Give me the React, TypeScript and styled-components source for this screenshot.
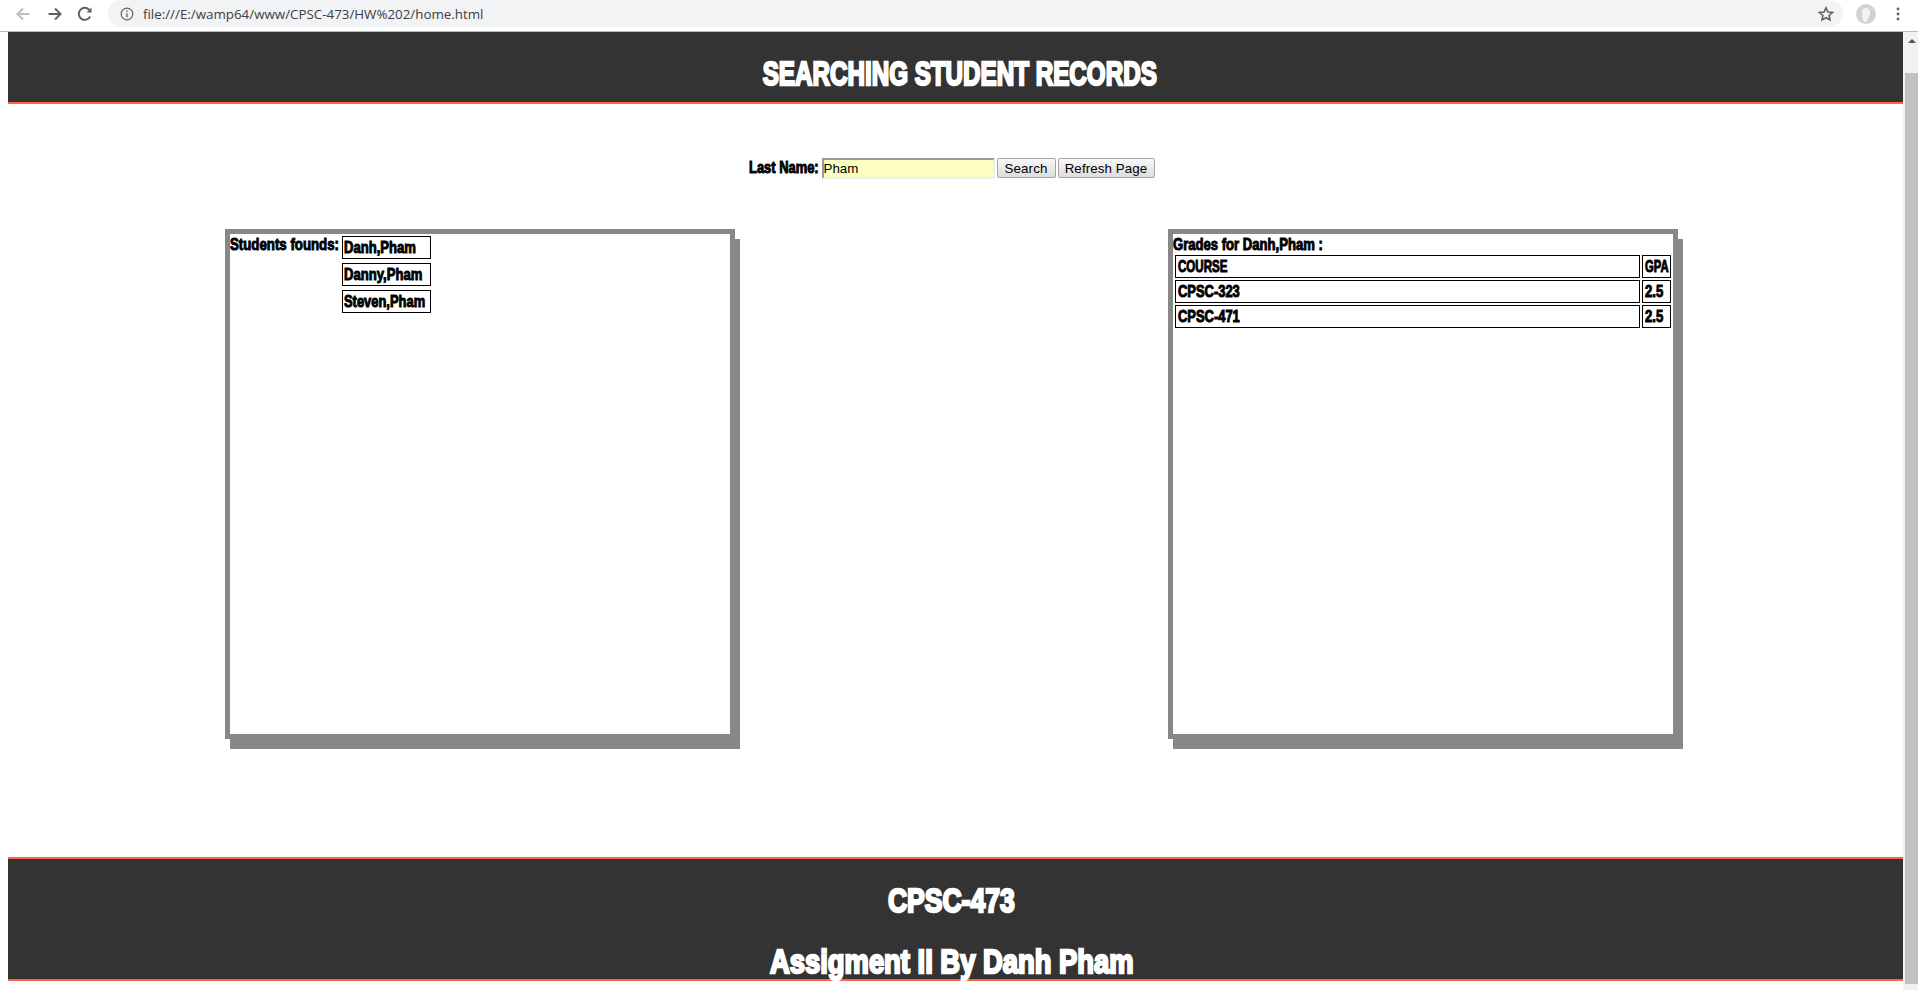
import React from "react";
import styled, { createGlobalStyle, css } from "styled-components";

const Global = createGlobalStyle`
  html, body { margin: 0; padding: 0; height: 990px; overflow: hidden; background: #fff; }
  #root { height: 990px; }
`;

const heavy = css`
  font-family: "Liberation Sans", sans-serif;
  font-weight: 700;
  white-space: nowrap;
  -webkit-text-stroke: 1px currentColor;
`;

const Squeeze = styled.span<{ $sx: number }>`
  display: inline-block;
  transform: scaleX(${(p) => p.$sx});
  transform-origin: left center;
`;

const Shell = styled.div`
  width: 1918px;
  height: 990px;
  display: flex;
  flex-direction: column;
  overflow: hidden;
`;
const Toolbar = styled.div`
  height: 31px;
  flex: none;
  display: flex;
  align-items: flex-start;
  background: #fff;
  border-bottom: 1px solid #b9b9b9;
`;
const NavButton = styled.div<{ $w: number; $ml?: number }>`
  width: ${(p) => p.$w}px;
  height: 27px;
  margin-left: ${(p) => p.$ml ?? 0}px;
  flex: none;
  display: flex;
  align-items: center;
  justify-content: center;
`;
const AddressBar = styled.div`
  width: 1735px;
  height: 27px;
  margin-left: 3px;
  flex: none;
  display: flex;
  align-items: center;
  background: #f1f3f4;
  border-radius: 14px;
  padding: 0 9px 0 12px;
  box-sizing: border-box;
`;
const Url = styled.span`
  margin-left: 9px;
  flex: 1;
  font: 13.35px "Open Sans", sans-serif;
  color: #3c4043;
  white-space: nowrap;
`;
const Body = styled.div`
  flex: 1;
  display: flex;
  min-height: 0;
`;
const Page = styled.div`
  flex: 1;
  display: flex;
  flex-direction: column;
  padding-left: 8px;
  min-width: 0;
`;
const Banner = styled.header`
  height: 70px;
  flex: none;
  background: #333;
  border-bottom: 2px solid #ff6347;
  display: flex;
  justify-content: center;
  padding-left: 8px;
`;
const Title = styled.h1`
  ${heavy};
  margin: 23px 0 0;
  font-size: 34px;
  line-height: 36px;
  color: #fff;
  -webkit-text-stroke: 2.4px #fff;
  transform: scaleX(0.712);
`;
const SearchRow = styled.form`
  margin: 54px 0 0;
  height: 21px;
  display: flex;
  align-items: flex-start;
  justify-content: center;
  padding-right: 8px;
`;
const Label = styled.label`
  ${heavy};
  width: 70px;
  font-size: 17px;
  line-height: 19px;
  color: #000;
  margin-right: 3px;
`;
const TextInput = styled.input`
  width: 173px;
  height: 21px;
  box-sizing: border-box;
  border-style: solid;
  border-width: 2px;
  border-color: #9a9a9a #eee #eee #9a9a9a;
  background: #fcffc0;
  padding: 0;
  font: 13.33px "Liberation Sans", sans-serif;
  color: #000;
  outline: none;
`;
const Btn = styled.button<{ $w: number }>`
  width: ${(p) => p.$w}px;
  height: 20px;
  box-sizing: border-box;
  margin-left: 2px;
  padding: 0;
  border: 1px solid #a6a6a6;
  border-radius: 2px;
  background: linear-gradient(#f8f8f8, #dddddd);
  font: 13.33px "Liberation Sans", sans-serif;
  letter-spacing: 0.1px;
  color: #000;
`;
const Panels = styled.div`
  display: flex;
  gap: 433px;
  margin-top: 50px;
  padding-left: 217px;
`;
const Panel = styled.section`
  width: 510px;
  height: 510px;
  box-sizing: border-box;
  border: 5px solid #888;
  box-shadow: 5px 10px 0 #888;
  background: #fff;
`;
const Students = styled.div`
  display: flex;
  align-items: flex-start;
  padding-top: 2px;
`;
const Caption = styled.div<{ $w: number }>`
  ${heavy};
  width: ${(p) => p.$w}px;
  font-size: 17px;
  line-height: 17px;
  color: #000;
`;
const GradesCaption = styled(Caption)`
  padding-top: 2px;
`;
const NameList = styled.div`
  display: flex;
  flex-direction: column;
  gap: 4px;
  margin-left: 2px;
`;
const Cell = styled.div`
  ${heavy};
  font-size: 17px;
  line-height: 21px;
  height: 23px;
  box-sizing: border-box;
  border: 1px solid #000;
  padding: 0 2px;
  color: #000;
  overflow: hidden;
`;
const NameCell = styled(Cell)`
  width: 89px;
  padding: 0 1px;
`;
const Grades = styled.div`
  display: grid;
  grid-template-columns: 465px 29px;
  gap: 2px;
  margin: 2px 0 0 2px;
`;
const Footer = styled.footer`
  margin-top: 118px;
  height: 120px;
  flex: none;
  background: #333;
  border-top: 2px solid #ff6347;
  border-bottom: 2px solid #ff6347;
  display: flex;
  flex-direction: column;
  align-items: center;
  padding-right: 8px;
  color: #fff;
`;
const FooterLine = styled.h2<{ $top: number; $sx: number }>`
  ${heavy};
  margin: ${(p) => p.$top}px 0 0;
  font-size: 34px;
  line-height: 36px;
  -webkit-text-stroke: 2.4px #fff;
  transform: scaleX(${(p) => p.$sx});
`;
const ScrollTrack = styled.div`
  width: 15px;
  flex: none;
  background: #f1f1f1;
  display: flex;
  flex-direction: column;
  align-items: flex-end;
`;
const ScrollUp = styled.div`
  align-self: center;
  margin: 7px 0 0 3px;
  width: 0;
  height: 0;
  border-left: 4px solid transparent;
  border-right: 4px solid transparent;
  border-bottom: 4px solid #505050;
`;
const ScrollThumb = styled.div`
  width: 13px;
  height: 911px;
  margin-top: 30px;
  background: #c1c1c1;
`;

export default function App() {
  return (
    <Shell>
      <Global />
      <Toolbar>
        <NavButton $w={45}>
          <svg width="16" height="16" viewBox="0 0 16 16" fill="none" stroke="#bdbdbd" strokeWidth="2"><path d="M14.5 8H2.5M8 2.5 2.5 8 8 13.5" /></svg>
        </NavButton>
        <NavButton $w={20}>
          <svg width="16" height="16" viewBox="0 0 16 16" fill="none" stroke="#5f6368" strokeWidth="2"><path d="M1.5 8h12M8 2.5 13.5 8 8 13.5" /></svg>
        </NavButton>
        <NavButton $w={40}>
          <svg width="16" height="16" viewBox="0 0 16 16" fill="none" stroke="#5f6368" strokeWidth="2"><path d="M13.2 10.5A6 6 0 1 1 12.3 3.8L14 5.5" /><path d="M14.5 1.5v5h-5" fill="#5f6368" stroke="none" /></svg>
        </NavButton>
        <AddressBar>
          <svg width="14" height="14" viewBox="0 0 14 14" fill="none" stroke="#5f6368"><circle cx="7" cy="7" r="5.8" strokeWidth="1.2" /><path d="M7 6.2v4M7 3.6v1.3" strokeWidth="1.3" /></svg>
          <Url>file:///E:/wamp64/www/CPSC-473/HW%202/home.html</Url>
          <svg width="16" height="16" viewBox="0 0 16 16" fill="none" stroke="#5f6368" strokeWidth="1.6"><path d="M8 1.8 9.9 6l4.5.5-3.3 3 .9 4.5L8 11.7 4 14l.9-4.5-3.3-3L6.1 6z" /></svg>
        </AddressBar>
        <NavButton $w={44} $ml={1}>
          <svg width="20" height="20" viewBox="0 0 20 20"><circle cx="10" cy="10" r="10" fill="#d0d2d4" /><path d="M6 13V8a4 4 0 0 1 8 0c0 4-1 5-2 6l-1 4H8z" fill="#f1f3f4" /></svg>
        </NavButton>
        <NavButton $w={10} $ml={5}>
          <svg width="4" height="14" viewBox="0 0 4 14" fill="#5f6368"><circle cx="2" cy="2" r="1.4" /><circle cx="2" cy="7" r="1.4" /><circle cx="2" cy="12" r="1.4" /></svg>
        </NavButton>
      </Toolbar>
      <Body>
        <Page>
          <Banner>
            <Title>SEARCHING STUDENT RECORDS</Title>
          </Banner>
          <SearchRow>
            <Label><Squeeze $sx={0.76}>Last Name:</Squeeze></Label>
            <TextInput defaultValue="Pham" />
            <Btn type="button" $w={59}>Search</Btn>
            <Btn type="button" $w={97}>Refresh Page</Btn>
          </SearchRow>
          <Panels>
            <Panel>
              <Students>
                <Caption $w={110}><Squeeze $sx={0.78}>Students founds:</Squeeze></Caption>
                <NameList>
                  <NameCell><Squeeze $sx={0.77}>Danh,Pham</Squeeze></NameCell>
                  <NameCell><Squeeze $sx={0.77}>Danny,Pham</Squeeze></NameCell>
                  <NameCell><Squeeze $sx={0.76}>Steven,Pham</Squeeze></NameCell>
                </NameList>
              </Students>
            </Panel>
            <Panel>
              <GradesCaption $w={150}><Squeeze $sx={0.77}>Grades for Danh,Pham :</Squeeze></GradesCaption>
              <Grades>
                <Cell><Squeeze $sx={0.68}>COURSE</Squeeze></Cell>
                <Cell><Squeeze $sx={0.66}>GPA</Squeeze></Cell>
                <Cell><Squeeze $sx={0.76}>CPSC-323</Squeeze></Cell>
                <Cell><Squeeze $sx={0.77}>2.5</Squeeze></Cell>
                <Cell><Squeeze $sx={0.76}>CPSC-471</Squeeze></Cell>
                <Cell><Squeeze $sx={0.77}>2.5</Squeeze></Cell>
              </Grades>
            </Panel>
          </Panels>
          <Footer>
            <FooterLine $top={23} $sx={0.78}>CPSC-473</FooterLine>
            <FooterLine $top={25} $sx={0.805}>Assigment II By Danh Pham</FooterLine>
          </Footer>
        </Page>
        <ScrollTrack>
          <ScrollUp />
          <ScrollThumb />
        </ScrollTrack>
      </Body>
    </Shell>
  );
}
